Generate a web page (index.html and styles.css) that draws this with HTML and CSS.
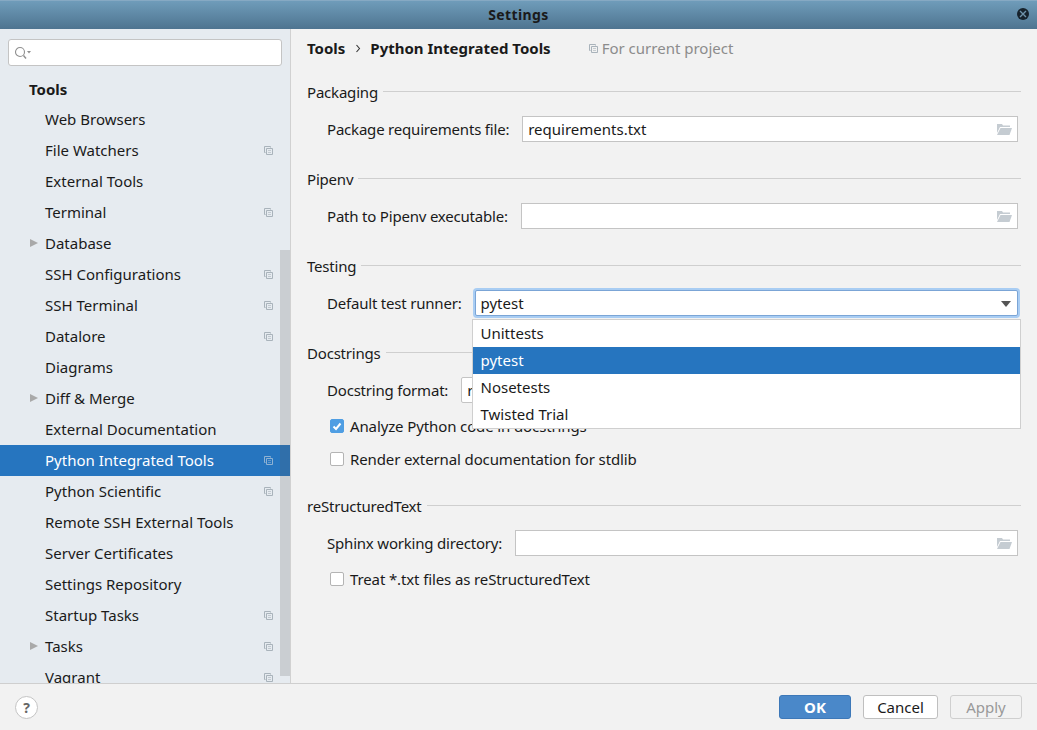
FILE: index.html
```html
<!DOCTYPE html>
<html lang="en">
<head>
    <meta charset="UTF-8">
    <meta name="viewport" content="width=device-width, initial-scale=1.0">
    <title>Settings</title>
    <link rel="stylesheet" href="styles.css">
</head>

<body>
    <svg class="icon-defs" width="0" height="0">
        <symbol id="copy" viewBox="0 0 9 9">
            <path d="M1.500 6.500H.5V.5H6.500V1.500" fill="none" stroke="currentColor"/>
            <path d="M2.500 2.500H8.500V8.500H2.500Z" fill="none" stroke="currentColor"/>
            <path d="M4 4.500H7M4 6.500H7" stroke="currentColor" opacity=".6"/>
        </symbol>
        <symbol id="folder" viewBox="0 0 15 11">
            <path d="M0 0H5L6 1.500H13V3H3L0 9Z" fill="currentColor"/>
            <path d="M3.500 4H15L12.500 11H0Z" fill="currentColor"/>
        </symbol>
    </svg>

    <div class="window">
        <header class="titlebar">
            <span class="title">Settings</span>
            <span class="close">
                <svg width="8" height="8" viewBox="0 0 8 8"><path d="M1 1L7 7M7 1L1 7" stroke="#6f93ab" stroke-width="1.400"/></svg>
            </span>
        </header>

        <div class="main">
            <aside class="sidebar">
                <div class="search">
                    <svg width="18" height="14" viewBox="0 0 18 14">
                        <circle cx="6" cy="6" r="4.500" fill="none" stroke="#8f8f8f" stroke-width="1.100"/>
                        <path d="M9.500 9.500L12 12.500" stroke="#8f8f8f" stroke-width="1.400"/>
                        <path d="M13 5H17L15 7.500Z" fill="#8f8f8f"/>
                    </svg>
                </div>
                <div class="tree-head">Tools</div>
                <ul class="tree">
                    <li class="item">Web Browsers</li>
                    <li class="item">File Watchers<svg class="copy"><use href="#copy"/></svg></li>
                    <li class="item">External Tools</li>
                    <li class="item">Terminal<svg class="copy"><use href="#copy"/></svg></li>
                    <li class="item has-arrow">Database</li>
                    <li class="item">SSH Configurations<svg class="copy"><use href="#copy"/></svg></li>
                    <li class="item">SSH Terminal<svg class="copy"><use href="#copy"/></svg></li>
                    <li class="item">Datalore<svg class="copy"><use href="#copy"/></svg></li>
                    <li class="item">Diagrams</li>
                    <li class="item has-arrow">Diff &amp; Merge</li>
                    <li class="item">External Documentation</li>
                    <li class="item selected">Python Integrated Tools<svg class="copy"><use href="#copy"/></svg></li>
                    <li class="item">Python Scientific<svg class="copy"><use href="#copy"/></svg></li>
                    <li class="item">Remote SSH External Tools</li>
                    <li class="item">Server Certificates</li>
                    <li class="item">Settings Repository</li>
                    <li class="item">Startup Tasks<svg class="copy"><use href="#copy"/></svg></li>
                    <li class="item has-arrow">Tasks<svg class="copy"><use href="#copy"/></svg></li>
                    <li class="item">Vagrant<svg class="copy"><use href="#copy"/></svg></li>
                </ul>
                <div class="scrollbar"></div>
            </aside>

            <section class="content">
                <div class="crumbs">
                    <b>Tools</b>
                    <svg class="crumb-arrow" width="6" height="9" viewBox="0 0 6 9"><path d="M1.500 1L4.500 4.500L1.500 8" fill="none" stroke="#333" stroke-width="1.100"/></svg>
                    <b>Python Integrated Tools</b>
                    <span class="scope"><svg class="copy"><use href="#copy"/></svg>For current project</span>
                </div>

                <div class="group">
                    <h3 class="group-title">Packaging</h3>
                    <div class="field">
                        <label>Package requirements file:</label>
                        <div class="input">requirements.txt<svg class="folder"><use href="#folder"/></svg></div>
                    </div>
                </div>

                <div class="group">
                    <h3 class="group-title">Pipenv</h3>
                    <div class="field">
                        <label>Path to Pipenv executable:</label>
                        <div class="input"><svg class="folder"><use href="#folder"/></svg></div>
                    </div>
                </div>

                <div class="group">
                    <h3 class="group-title">Testing</h3>
                    <div class="field">
                        <label>Default test runner:</label>
                        <div class="input combo focused">pytest
                            <svg class="combo-arrow" width="10" height="6" viewBox="0 0 10 6"><path d="M0 0H10L5 6Z" fill="#555"/></svg>
                            <ul class="popup">
                                <li>Unittests</li>
                                <li class="selected">pytest</li>
                                <li>Nosetests</li>
                                <li>Twisted Trial</li>
                            </ul>
                        </div>
                    </div>
                </div>

                <div class="group docstrings">
                    <h3 class="group-title">Docstrings</h3>
                    <div class="field">
                        <label>Docstring format:</label>
                        <div class="input combo">reStructuredText</div>
                    </div>
                    <div class="check first"><span class="box checked"><svg width="10" height="9" viewBox="0 0 10 9"><path d="M1.500 4.500L4 7L8.500 1.500" fill="none" stroke="#fff" stroke-width="2"/></svg></span>Analyze Python code in docstrings</div>
                    <div class="check second"><span class="box"></span>Render external documentation for stdlib</div>
                </div>

                <div class="group last">
                    <h3 class="group-title">reStructuredText</h3>
                    <div class="field">
                        <label>Sphinx working directory:</label>
                        <div class="input"><svg class="folder"><use href="#folder"/></svg></div>
                    </div>
                    <div class="check third"><span class="box"></span>Treat *.txt files as reStructuredText</div>
                </div>
            </section>
        </div>

        <footer class="footer">
            <span class="help">?</span>
            <div class="buttons">
                <button class="btn primary">OK</button>
                <button class="btn">Cancel</button>
                <button class="btn disabled">Apply</button>
            </div>
        </footer>
    </div>
</body>
</html>
```

FILE: styles.css
```css
/* Page */
html, body {
    margin: 0;
    padding: 0;
}

body {
    font-family: "Noto Sans", sans-serif;
    font-size: 15px;
    color: #1a1a1a;
    background-color: #f2f2f2;
}

ul {
    list-style: none;
    margin: 0;
    padding: 0;
}

.icon-defs {
    position: absolute;
}

.window {
    width: 1037px;
    height: 730px;
    display: flex;
    flex-direction: column;
    overflow: hidden;
}

/* Title bar */
.titlebar {
    height: 29px;
    flex: none;
    display: flex;
    align-items: center;
    justify-content: center;
    position: relative;
    padding-bottom: 2px;
    background: linear-gradient(#6f9cba, #4e7490);
    border-top: 1px solid #86a9c3;
    box-sizing: border-box;
}

.title {
    font-size: 14px;
    font-weight: bold;
    letter-spacing: .4px;
}

.close {
    position: absolute;
    right: 8px;
    top: 7px;
    width: 12px;
    height: 12px;
    border-radius: 50%;
    background-color: #16222c;
    display: flex;
    align-items: center;
    justify-content: center;
}

.main {
    flex: 1;
    display: flex;
    min-height: 0;
}

/* Sidebar */
.sidebar {
    width: 290px;
    flex: none;
    position: relative;
    overflow: hidden;
    background-color: #e6ebf0;
    border-right: 1px solid #d1d1d1;
}

.search {
    height: 25px;
    margin: 10px 8px 0;
    padding-left: 5px;
    display: flex;
    align-items: center;
    background-color: white;
    border: 1px solid #c4c4c4;
    border-radius: 3px;
}

.tree-head {
    margin: 9px 0 0 29px;
    height: 29px;
    line-height: 28px;
    font-weight: bold;
}

.item {
    height: 31px;
    line-height: 30px;
    padding-left: 45px;
    position: relative;
}

.item.selected {
    background-color: #2675bf;
    color: white;
}

.has-arrow::before {
    content: "";
    position: absolute;
    left: 30px;
    top: 11px;
    border-left: 8px solid #a9a9a9;
    border-top: 4.500px solid transparent;
    border-bottom: 4.500px solid transparent;
}

.copy {
    width: 9px;
    height: 9px;
    color: #a9b3bb;
}

.item .copy {
    position: absolute;
    left: 264px;
    top: 11px;
}

.selected .copy {
    color: #8fb2d3;
}

.scrollbar {
    position: absolute;
    right: 0;
    top: 221px;
    bottom: 7px;
    width: 10px;
    background-color: rgba(90, 90, 90, .2);
}

/* Right panel */
.content {
    flex: 1;
    padding: 8px 16px 0;
    min-width: 0;
}

.crumbs {
    height: 22px;
    line-height: 22px;
    display: flex;
    align-items: center;
}

.crumb-arrow {
    margin: 0 9px 0 10px;
}

.scope {
    margin-left: 38px;
    color: #8c8c8c;
    display: flex;
    align-items: center;
}

.scope .copy {
    margin-right: 4px;
}

.group {
    margin-bottom: 26px;
}

.group.docstrings {
    margin-bottom: 25px;
}

.crumbs + .group {
    margin-top: 22px;
}

.group-title {
    margin: 0 0 13px;
    height: 22px;
    line-height: 22px;
    font-size: 15px;
    font-weight: normal;
    letter-spacing: -.2px;
    display: flex;
    align-items: center;
    gap: 5px;
}

.group-title::after {
    content: "";
    flex: 1;
    height: 1px;
    background-color: #cfcfcf;
    margin-top: -2px;
}

.field {
    display: flex;
    align-items: center;
    margin: 0 3px 0 20px;
    gap: 13px;
}

.field label {
    letter-spacing: -.2px;
}

.input {
    flex: 1;
    height: 26px;
    line-height: 24px;
    box-sizing: border-box;
    padding-left: 5px;
    position: relative;
    background-color: white;
    border: 1px solid #c4c4c4;
}

.folder {
    position: absolute;
    right: 5px;
    top: 7px;
    width: 15px;
    height: 11px;
    color: #c5ccd2;
}

.combo {
    border-radius: 2px;
}

.focused {
    z-index: 2;
    border-color: #7ba5d6;
    box-shadow: 0 0 0 2px #a9cdf3;
}

.combo-arrow {
    position: absolute;
    right: 6px;
    top: 10px;
}

.popup {
    position: absolute;
    left: -4px;
    right: -4px;
    top: 28px;
    background-color: white;
    border: 1px solid #cfcfcf;
}

.popup li {
    height: 27px;
    line-height: 27px;
    padding-left: 8px;
}

.popup .selected {
    background-color: #2675bf;
    color: white;
}

/* Checkboxes */
.check {
    display: flex;
    align-items: center;
    height: 22px;
    margin-left: 23px;
    gap: 6px;
    letter-spacing: -.12px;
}

.check.first {
    margin-top: 12px;
}

.check.second {
    margin-top: 11px;
}

.check.third {
    margin-top: 12px;
}

.box {
    width: 14px;
    height: 14px;
    box-sizing: border-box;
    display: flex;
    align-items: center;
    justify-content: center;
    background-color: white;
    border: 1px solid #b4b4b4;
    border-radius: 2px;
}

.box.checked {
    background-color: #4f9ee3;
    border-color: #4f9ee3;
}

/* Footer */
.footer {
    height: 47px;
    flex: none;
    box-sizing: border-box;
    border-top: 1px solid #cfcfcf;
    display: flex;
    align-items: center;
    justify-content: space-between;
    padding: 0 15px;
}

.help {
    width: 21px;
    height: 21px;
    border-radius: 50%;
    background-color: white;
    border: 1px solid #c4c4c4;
    color: #666;
    font-weight: bold;
    font-size: 14px;
    text-align: center;
    line-height: 21px;
}

.buttons {
    display: flex;
    gap: 12px;
}

.btn {
    width: 75px;
    height: 24px;
    padding: 1px 0 0;
    font: inherit;
    line-height: 21px;
    color: #1a1a1a;
    background-color: white;
    border: 1px solid #bfbfbf;
    border-radius: 3px;
}

.btn.primary {
    width: 72px;
    font-weight: bold;
    color: white;
    background-color: #4a88c9;
    border-color: #3d78b8;
}

.btn.disabled {
    width: 72px;
    color: #999;
    background-color: #f2f2f2;
    border-color: #cfcfcf;
}
```
